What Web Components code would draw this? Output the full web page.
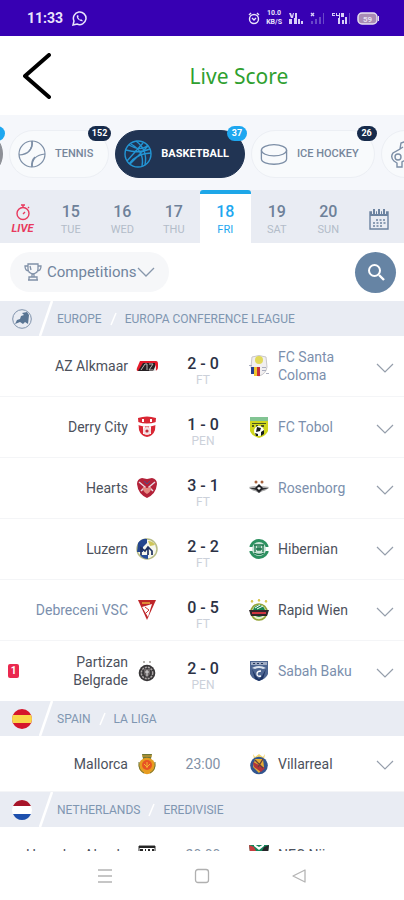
<!DOCTYPE html>
<html lang="en">
<head>
<meta charset="utf-8">
<meta name="viewport" content="width=device-width, initial-scale=1">
<title>Live Score</title>
<style>
  body {
    margin: 0;
    background: #fff;
    font-family: Roboto, "Liberation Sans", sans-serif;
    color: #3d4350;
  }
</style>
</head>
<body>
<live-score-app></live-score-app>

<script>
// small helper: every element gets an open shadow root filled from a template
function attach(el, html) {
  const template = document.createElement('template');
  template.innerHTML = html;
  el.attachShadow({mode: 'open'});
  el.shadowRoot.appendChild(template.content.cloneNode(true));
}

// club crests, all on a 22x22 grid
const crests = {
  az: `<path d="M4 6h16q2 0 2 3v3q0 4-4 4H2q-2 0-1-3z" fill="#e31b2b"/><path d="M2 16l5-8h12v8z" fill="#252023"/><path d="M5 15l4-6h2v6M13 9h4l-4 6h4" fill="none" stroke="#bdb6b6" stroke-width="1"/><path d="M20 10v6h-3z" fill="#e9e6e6"/>`,
  derry: `<path d="M2 2q9-3 18 0l-1 12q-2 6-8 7-6-1-8-7z" fill="#d92734"/><path d="M2 6q9 3 18 0v3q-9 3-18 0zM7 10h2v8H7zM13 10h2v8h-2zM6 3h2v3H6zM14 3h2v3h-2z" fill="#fff"/><circle cx="11" cy="15" r="4" fill="#f4dfe2"/><circle cx="11" cy="15" r="1.6" fill="#c32b38"/>`,
  hearts: `<path d="M11 21Q2 17 1 7q0-5 5-6l5 1 5-1q5 1 5 6-1 10-10 14z" fill="#b32239"/><path d="M3 5l6 5-4 4M19 5l-6 5 4 4" fill="none" stroke="#e3d6df" stroke-width="1.5"/><path d="M11 17q-5-3-4-7l4 1 4-1q1 4-4 7z" fill="#e58a82"/><path d="M8 4l3 3 3-3" fill="none" stroke="#4c548a"/>`,
  luzern: `<circle cx="11" cy="11" r="10" fill="#f6f7ed" stroke="#b8bc85" stroke-width="1.5"/><path d="M2 5q4-5 9-4v4L7 9v5H1z" fill="#24468e"/><path d="M12 3q5 0 7 4l-5 1z" fill="#cfc65a"/><path d="M5 17V10l4 3 3-4 4 4v4M12 9v8" fill="none" stroke="#1f3260" stroke-width="1.7"/><path d="M4 17h8v4q-5 0-8-4z" fill="#27509b"/>`,
  debrecen: `<path d="M2 1h18l-9 20z" fill="#be2529"/><path d="M6 8l10-3-4 13z" fill="#fff"/><path d="M6 3h8v2H6z" fill="#de8b38"/><path d="M9 8l4 3-3 3" stroke="#c33" fill="none"/>`,
  partizan: `<path d="M7 1h2v2H7zM13 1h2v2h-2z" fill="#b7b4b0"/><circle cx="11" cy="13" r="8.3" fill="#383638"/><circle cx="11" cy="13" r="5.7" fill="none" stroke="#aaa5a5" stroke-width="1.5" stroke-dasharray="2 1"/><path d="M8 9h6v5l-3 4-3-4z" fill="#6a6566"/><path d="M11 10v6M9 12h4" stroke="#ddd"/>`,
  mallorca: `<path d="M6 1h10l-1 5H7z" fill="#6c7739"/><path d="M6 3h10" stroke="#e2a531"/><circle cx="11" cy="13" r="8.3" fill="#e79c20"/><path d="M3 9q-1 8 5 11M19 9q1 8-5 11" fill="none" stroke="#697a40"/><circle cx="11" cy="12" r="5" fill="#e85324"/><path d="M8 11l3 3 3-3M11 9v6" fill="none" stroke="#f4b632"/>`,
  heracles: `<path d="M3 2h16v13l-8 6-8-6z" fill="#fff" stroke="#333"/><path d="M3 2h16v2H3zM4 5h3v12H4zM9 5h1v13H9zM12 5h2v14h-2zM16 5h2v11h-2z" fill="#252525"/>`,
  santa: `<path d="M4 2q7-3 14 0l1 10q-1 7-8 9-7-2-8-9z" fill="#f1eff0" stroke="#c9c7c9"/><circle cx="11" cy="5" r="4" fill="#e1d95b"/><path d="M3 12h3v7H3z" fill="#273f91"/><path d="M6 12h3v9H6z" fill="#f0c72f"/><path d="M9 12h3v9H9z" fill="#c8303c"/><path d="M14 12h4v1h-4zM14 15h4v1h-4zM1 10h3v1H1zM18 18h3v1h-3z" fill="#aaaec0"/>`,
  tobol: `<path d="M2 1h18v14q-2 5-9 7-7-2-9-7z" fill="#cfd61d"/><path d="M2 1h18v4H2z" fill="#82c493"/><path d="M4 7h14v1H4zM4 9h2v2H4zM8 9h2v2H8zM13 9h3v2h-3z" fill="#4b581e"/><circle cx="11" cy="15" r="5" fill="#fff"/><path d="M9 11l4 1-1 3-4 1zM13 16l3-2v4l-3 2zM7 17l3 1v2H8z" fill="#171e1b"/>`,
  rosenborg: `<circle cx="8" cy="5" r="1.5" fill="#a6633f"/><circle cx="14" cy="5" r="1.5" fill="#a6633f"/><path d="M1 10q6-1 10-1t10 1q-3 4-6 4l-4 2-4-2q-3 0-6-4z" fill="#a9a9a9"/><path d="M1 11h20l-7 2-3 3-3-3z" fill="#303135"/><path d="M11 7l4 4-4 4-4-4z" fill="#202125"/><path d="M9 11l2-1 2 1-2 2z" fill="#fff"/>`,
  hibs: `<circle cx="11" cy="11" r="10" fill="#2c9160"/><path d="M0 9h22v4H0z" fill="#fff"/><circle cx="11" cy="11" r="7" fill="#cce5d8"/><path d="M6 7h10M7 7v7M15 7v7M10 8v5M12 8v5M6 15q5 3 10 0M8 11h6" stroke="#187348" fill="none" stroke-width="1.3"/>`,
  rapid: `<path d="M4 1l1 2H3zM11 0l1 2h-2zM18 1l1 2h-2z" stroke="#dac64b" fill="#dac64b"/><circle cx="11" cy="13" r="8" fill="#e8efcc" stroke="#92a335" stroke-width="1.6"/><circle cx="11" cy="12" r="6" fill="#18864f"/><path d="M7 9l5-3M9 10l6-3" stroke="#fff"/><path d="M1 11h20l-2 6H3z" fill="#30262b"/><path d="M4 13h14v2H4z" fill="#cf3540"/>`,
  sabah: `<path d="M2 1h18v13q-2 5-9 7-7-2-9-7z" fill="#4c6591"/><path d="M3 2h16v3H3z" fill="#9eabc3"/><path d="M5 3h2v1H5zM9 3h2v1H9zM13 3h2v1h-2z" fill="#263759"/><path d="M4 8q7-4 14 0l-3 1q-4-2-8 0z" fill="#dce4ef"/><path d="M4 9l4 7 3 3 3-3 4-7-3 10-4 2-4-2z" fill="#1e3565"/><path d="M13 11q-4 0-4 3t4 2" fill="none" stroke="#fff" stroke-width="1.3"/>`,
  villarreal: `<path d="M5 1l2 3 4-3 4 3 2-3-1 5H6z" fill="#efd36e"/><circle cx="11" cy="12.500" r="8.800" fill="#32558f"/><path d="M7 6h8l1 8-5 6-6-6z" fill="#e7ad32"/><path d="M5 9l12 6-4 4-7-5z" fill="#b3353a"/><path d="M7 7l8 8M15 6l-5 8" stroke="#673f3c" stroke-width="1.3"/>`,
  nec: `<path d="M1 1h20l-2 15-8 5-8-5z" fill="#14855a"/><path d="M1 1l5 2 2 4-6 2z" fill="#c83c3f"/><path d="M21 1l-5 2-2 4 6 2z" fill="#27252a"/><path d="M6 2l5 4 5-4v-2l-5 3-5-3z" fill="#fff"/>`
};

class StatusBar extends HTMLElement {
  constructor() {
    super();
    attach(this, `
      <style>
        :host {
          display: flex;
          flex: none;
          align-items: center;
          box-sizing: border-box;
          height: 36px;
          padding: 0 24px 0 27px;
          gap: 9px;
          background: #3700b3;
          color: #e9e4fb;
          font-size: 14px;
          font-weight: 700;
        }
        svg { display: block; flex: none; }
        .right { display: flex; align-items: center; gap: 6px; margin-left: auto; }
        .speed { font-size: 7px; line-height: 9px; text-align: center; }
      </style>
      <span>11:33</span>
      <svg width="15" height="15" viewBox="0 0 15 15" fill="none" stroke="#e9e4fb" stroke-width="1.5"><path d="M1 14l1-4a6.300 6.300 0 1 1 3 3z"/><path d="M5 4q-1 3 2 5t4 1l-2-2-1 1-2-3 1-1z" fill="#e9e4fb" stroke="none"/></svg>
      <div class="right">
        <svg width="12" height="13" viewBox="0 0 12 13" fill="none" stroke="#e9e4fb" stroke-width="1.4"><circle cx="6" cy="7" r="4.500"/><path d="M1 3l2-2M11 3L9 1M4 6l2 2 2-2"/></svg>
        <div class="speed">10.0<br>KB/S</div>
        <svg width="16" height="13" viewBox="0 0 16 13" fill="#d9d0f7"><path d="M1 1h2l1 3 1-3h1L5 6H3zM7 1h2v5H7zM1 7h3v5H1zM6 6h3v6H6zM10 7h2v5h-2zM13 9h2v3h-2z"/></svg>
        <svg width="15" height="13" viewBox="0 0 15 13"><path d="M1 1l3 3M4 1L1 4" stroke="#d9d0f7" stroke-width="1.400"/><path d="M1 9h2v3H1zM5 7h2v5H5zM9 5h2v7H9zM13 1h1v11h-1z" fill="#6947c8"/></svg>
        <svg width="20" height="13" viewBox="0 0 20 13" fill="#d9d0f7"><path d="M1 1h3v1H2v1h2v1H1zM5 1h1v2h2V1h1v5H8V4H5zM10 1h3v4h-3zM7 6h2v6H7zM11 8h2v4h-2zM14 5h2v7h-2z"/><path d="M18 1h1v11h-1z" fill="#6947c8"/></svg>
        <svg width="23" height="13" viewBox="0 0 23 13"><rect x="1" y="1" width="19" height="11" rx="4" fill="#a98bb5" stroke="#e6dff0" stroke-width="1.500"/><path d="M21 4h1v5h-1z" fill="#e6dff0"/><text x="10.500" y="9.500" font-size="8" font-weight="700" text-anchor="middle" fill="#e6dff0">59</text></svg>
      </div>
    `);
  }
}

class PageHeader extends HTMLElement {
  constructor() {
    super();
    attach(this, `
      <style>
        :host {
          display: grid;
          flex: none;
          grid-template-columns: 74px 1fr;
          align-items: center;
          height: 79px;
        }
        button { justify-self: center; padding: 0; border: 0; background: none; }
        svg { display: block; }
        h1 {
          margin: 0;
          font: 400 21px/30px "Noto Sans", sans-serif;
          color: #2fa02f;
          text-align: center;
        }
      </style>
      <button aria-label="Back"><svg width="28" height="46" viewBox="0 0 28 46" fill="none" stroke="#000" stroke-width="4" stroke-linecap="round" stroke-linejoin="round"><path d="M26 2L2 23l24 21"/></svg></button>
      <h1><slot></slot></h1>
    `);
  }
}

class SportTab extends HTMLElement {
  constructor() {
    super();
    attach(this, `
      <style>
        :host { display: block; position: relative; flex: none; }
        button {
          display: flex;
          align-items: center;
          gap: 9px;
          height: 48px;
          padding: 0 15px 0 8px;
          border: 1px solid #eceff4;
          border-radius: 24px;
          background: #f8fafc;
          color: #76869b;
          font: 500 11px/16px Roboto, sans-serif;
          white-space: nowrap;
        }
        :host([active]) button {
          background: #213453;
          border-color: #213453;
          color: #fff;
          font-weight: 700;
        }
        :host([muted]) button { background: #8d9097; border-color: #8d9097; }
        .badge {
          position: absolute;
          top: -4px;
          right: -2px;
          min-width: 12px;
          padding: 0 4px;
          border-radius: 8px;
          background: #172b4b;
          color: #fff;
          font-size: 9px;
          line-height: 15px;
          font-weight: 700;
          text-align: center;
        }
        .badge:empty { display: none; }
        :host([blue]) .badge { display: block; min-height: 15px; background: #1ea7f0; }
      </style>
      <button><slot name="icon"></slot><slot></slot></button>
      <span class="badge"></span>
    `);
  }
  connectedCallback() {
    this.shadowRoot.querySelector('.badge').textContent = this.getAttribute('count') || '';
  }
}

class SportTabs extends HTMLElement {
  constructor() {
    super();
    attach(this, `
      <style>
        :host {
          display: flex;
          flex: none;
          box-sizing: border-box;
          gap: 6px;
          padding: 15px 0 12px;
          overflow: hidden;
          background: #f5f7fb;
        }
        svg { display: block; flex: none; }
      </style>
      <sport-tab blue muted><svg slot="icon" width="28" height="28" viewBox="0 0 28 28" fill="none" stroke="#fff"><circle cx="14" cy="14" r="13"/></svg></sport-tab>
      <sport-tab count="152">
        <svg slot="icon" width="28" height="28" viewBox="0 0 28 28" fill="none" stroke="#7c8ea6" stroke-width="1.200"><circle cx="14" cy="14" r="13"/><path d="M11 1q3 8-1 11-3 3-9 2M15 1q3 9-2 13-5 4-11 3" stroke="none"/><path d="M14 1q1 13-13 14M14 27q0-12 13-13"/><path d="M14 1q1 6-3 10M14 27q-1-6 3-10" stroke-width="1.600"/></svg>
        TENNIS
      </sport-tab>
      <sport-tab active blue count="37">
        <svg slot="icon" width="28" height="28" viewBox="0 0 28 28" fill="none" stroke="#2395d4" stroke-width="1.400"><circle cx="14" cy="14" r="13"/><path d="M5 5q12 7 19 0M2 10q13 4 24-1M12 1q12 9 9 24M7 4q14 8 11 22M19 3L3 21M24 6L6 24M5 24q8-11 22-11"/></svg>
        BASKETBALL
      </sport-tab>
      <sport-tab count="26">
        <svg slot="icon" width="28" height="28" viewBox="0 0 30 28" fill="none" stroke="#7c8ea6" stroke-width="1.400"><ellipse cx="15" cy="10" rx="13.500" ry="6"/><path d="M1.500 10v9c0 8 27 8 27 0v-9"/></svg>
        ICE HOCKEY
      </sport-tab>
      <sport-tab>
        <svg slot="icon" width="28" height="28" viewBox="0 0 28 28" fill="none" stroke="#7c8ea6" stroke-width="1.400"><path d="M14 2l-3 1-1 6-7 4q-3 4 1 8l3 2v4h5v-5l5-3V4zM10 9l3-2"/><circle cx="8" cy="17" r="3"/></svg>
      </sport-tab>
    `);
  }
  connectedCallback() {
    // the strip opens scrolled just past the first sport
    const first = this.shadowRoot.querySelector('sport-tab');
    this.scrollLeft = first.offsetWidth - 3;
  }
}

class DayTab extends HTMLElement {
  constructor() {
    super();
    attach(this, `
      <style>
        :host { display: block; }
        button {
          display: flex;
          flex-direction: column;
          align-items: center;
          box-sizing: border-box;
          width: 100%;
          height: 53px;
          padding: 8px 0 0;
          border: 0;
          border-top: 4px solid transparent;
          border-radius: 3px 3px 0 0;
          background: none;
          color: #b3bcc9;
          font: 400 11px/16px Roboto, sans-serif;
        }
        b { font-size: 16px; line-height: 20px; font-weight: 500; color: #6e8199; }
        :host([active]) button { background: #fff; border-top-color: #1ea7e8; color: #1ea7f0; }
        :host([active]) b { color: #1ea7f0; }
      </style>
      <button><b></b><slot></slot></button>
    `);
  }
  connectedCallback() {
    this.shadowRoot.querySelector('b').textContent = this.getAttribute('date');
  }
}

class DayStrip extends HTMLElement {
  constructor() {
    super();
    attach(this, `
      <style>
        :host {
          display: grid;
          flex: none;
          grid-template-columns: 45px repeat(6, 1fr) 50px;
          background: #e9ecf3;
        }
        button {
          display: flex;
          flex-direction: column;
          align-items: center;
          justify-content: center;
          padding: 4px 0 0;
          border: 0;
          background: none;
        }
        .live {
          gap: 1px;
          padding-top: 6px;
          color: #e8395d;
          font: italic 700 11px/14px Roboto, sans-serif;
        }
      </style>
      <button class="live">
        <svg width="16" height="17" viewBox="0 0 16 17" fill="none" stroke="#e8395d" stroke-width="1.400"><circle cx="8" cy="9.500" r="6"/><path d="M6 1h4M8 1v2M8 10l2-2M13 3l1 1"/></svg>
        LIVE
      </button>
      <day-tab date="15">TUE</day-tab>
      <day-tab date="16">WED</day-tab>
      <day-tab date="17">THU</day-tab>
      <day-tab date="18" active>FRI</day-tab>
      <day-tab date="19">SAT</day-tab>
      <day-tab date="20">SUN</day-tab>
      <button aria-label="Calendar"><svg width="22" height="24" viewBox="0 0 22 24" fill="none" stroke="#6c83a0" stroke-width="1.400"><path d="M2 5h18v17H2z"/><path d="M2 7h18" stroke-width="4"/><path d="M6 2v5M11 2v5M16 2v5" stroke="#e9ecf3" stroke-width="4"/><path d="M6 2v5M11 2v5M16 2v5" stroke-width="2"/><path d="M8 13h10M5 16h13M5 19h10" stroke-width="1.600" stroke-dasharray="2 1.500"/></svg></button>
    `);
  }
}

class FilterBar extends HTMLElement {
  constructor() {
    super();
    attach(this, `
      <style>
        :host {
          display: flex;
          flex: none;
          align-items: center;
          justify-content: space-between;
          height: 58px;
          padding: 0 8px 0 10px;
        }
        button { display: flex; align-items: center; border: 0; padding: 0; }
        .competitions {
          height: 40px;
          padding: 0 14px;
          border-radius: 20px;
          background: #f6f7f9;
          color: #71859e;
          font: 400 15px/20px Roboto, sans-serif;
        }
        .competitions svg:first-child { margin-right: 5px; }
        .search {
          justify-content: center;
          width: 41px;
          height: 41px;
          border-radius: 50%;
          background: #6684a4;
        }
      </style>
      <button class="competitions">
        <svg width="18" height="18" viewBox="0 0 18 18" fill="none" stroke="#8091a8" stroke-width="1.300"><path d="M4 1h10v5q0 4-5 5-5-1-5-5zM4 3H1q0 5 4 5M14 3h3q0 5-4 5M8 11v3M10 11v3M5 14h8v3H5zM6 3l1 4M4 17h10"/></svg>
        Competitions
        <svg width="18" height="11" viewBox="0 0 18 11" fill="none" stroke="#8797ab" stroke-width="1.300"><path d="M1 1l8 8 8-8"/></svg>
      </button>
      <button class="search" aria-label="Search"><svg width="18" height="18" viewBox="0 0 18 18" fill="none" stroke="#fff" stroke-width="2"><circle cx="7.500" cy="7.500" r="5.500"/><path d="M12 12l5 5" stroke-width="2.400"/></svg></button>
    `);
  }
}

class LeagueHeader extends HTMLElement {
  constructor() {
    super();
    attach(this, `
      <style>
        :host {
          display: flex;
          align-items: center;
          height: 35px;
          padding-left: 12px;
          background: #e9ecf3;
          color: #7f96b1;
          font-size: 12px;
          line-height: 16px;
        }
        svg { display: block; }
        .cut { margin: 0 4px 0 7px; }
        .bar { margin: 0 8px; }
        a { color: inherit; text-decoration: none; }
      </style>
      <slot name="flag"></slot>
      <svg class="cut" width="14" height="35" viewBox="0 0 14 35"><path d="M13 0L1 35" stroke="#fff" stroke-width="2.500"/></svg>
      <a href="#country"><slot></slot></a>
      <svg class="bar" width="7" height="14" viewBox="0 0 7 14"><path d="M6 1L1 13" stroke="#fff" stroke-width="1.500"/></svg>
      <a href="#league"><slot name="league"></slot></a>
    `);
  }
}

class MatchRow extends HTMLElement {
  constructor() {
    super();
    attach(this, `
      <style>
        :host {
          display: grid;
          grid-template-columns: 158fr 90px 156fr;
          align-items: center;
          min-height: 60px;
          border-bottom: 1px solid #f4f5f7;
          font-size: 14px;
          line-height: 18px;
          color: #4c515c;
        }
        :host([last]) { border-bottom: 0; }
        :host([upcoming]) { min-height: 55px; }
        .home, .away { display: flex; align-items: center; gap: 8px; }
        .home { padding-left: 8px; text-align: right; }
        .home .name { margin-left: auto; }
        .away { padding-right: 10px; }
        .away button { margin-left: auto; }
        .lost { color: #7b8fad; }
        .crest { display: block; flex: none; }
        .card {
          flex: none;
          width: 11px;
          border-radius: 2px;
          background: #ea294f;
          color: #fff;
          font-size: 10px;
          line-height: 14px;
          font-weight: 700;
          text-align: center;
        }
        .middle { text-align: center; }
        .score { color: #2c3245; font-size: 16px; font-weight: 500; }
        .state { color: #ccd1da; font-size: 12px; line-height: 14px; }
        .played { padding-top: 10px; }
        .time { color: #8291a5; }
        button { flex: none; padding: 4px 0 0; border: 0; background: none; }
        button svg { display: block; }
      </style>
      <div class="home"></div>
      <div class="middle"></div>
      <div class="away"></div>
    `);
  }
  connectedCallback() {
    const get = name => this.getAttribute(name) || '';
    const find = selector => this.shadowRoot.querySelector(selector);
    const crest = id => `<svg class="crest" width="22" height="22" viewBox="0 0 22 22">${crests[id]}</svg>`;
    const lost = side => get('lost') === side ? ' lost' : '';

    find('.home').innerHTML =
      (get('card') ? `<span class="card">${get('card')}</span>` : '') +
      `<span class="name${lost('home')}">${get('home')}</span>${crest(get('home-crest'))}`;

    find('.middle').innerHTML = this.hasAttribute('upcoming')
      ? `<div class="time">${get('score')}</div>`
      : `<div class="played"><div class="score">${get('score')}</div><div class="state">${get('state')}</div></div>`;

    find('.away').innerHTML =
      `${crest(get('away-crest'))}<span class="name${lost('away')}">${get('away')}</span>
      <button aria-label="Details"><svg width="18" height="11" viewBox="0 0 18 11" fill="none" stroke="#959eab" stroke-width="1.200"><path d="M1 1l8 8 8-8"/></svg></button>`;
  }
}

class SystemNav extends HTMLElement {
  constructor() {
    super();
    attach(this, `
      <style>
        :host {
          display: flex;
          flex: none;
          align-items: center;
          justify-content: center;
          gap: 81px;
          height: 49px;
          background: #fff;
        }
        button { padding: 0; border: 0; background: none; }
        svg { display: block; }
      </style>
      <button aria-label="Menu"><svg width="16" height="16" viewBox="0 0 16 16" fill="none" stroke="#b4b4b4" stroke-width="1.500"><path d="M1 2h14M1 8h14M1 14h14"/></svg></button>
      <button aria-label="Home"><svg width="16" height="16" viewBox="0 0 16 16" fill="none" stroke="#b0b0b0" stroke-width="1.300"><rect x="1.500" y="1.500" width="13" height="13" rx="2.500"/></svg></button>
      <button aria-label="Back"><svg width="16" height="16" viewBox="0 0 16 16" fill="none" stroke="#b4b4b4" stroke-width="1.300" stroke-linejoin="round"><path d="M14 2v12L2 8z"/></svg></button>
    `);
  }
}

class LiveScoreApp extends HTMLElement {
  constructor() {
    super();
    attach(this, `
      <style>
        :host { display: flex; flex-direction: column; height: 100vh; }
        main { flex: 1; min-height: 0; overflow: hidden; }
        svg { display: block; }
      </style>
      <status-bar></status-bar>
      <page-header>Live Score</page-header>
      <sport-tabs></sport-tabs>
      <day-strip></day-strip>
      <filter-bar></filter-bar>
      <main>
        <league-header>
          <svg slot="flag" width="20" height="20" viewBox="0 0 20 20"><circle cx="10" cy="10" r="9.300" fill="#e9ecf3" stroke="#7f92ab"/><path d="M10 4l5-1 2 3-1 9-3-2-2 2-3-2-5 2 2-4 3-1 1-3 3-1z" fill="#587493"/></svg>
          EUROPE<span slot="league">EUROPA CONFERENCE LEAGUE</span>
        </league-header>
        <match-row home="AZ Alkmaar" home-crest="az" score="2 - 0" state="FT" away="FC Santa Coloma" away-crest="santa" lost="away"></match-row>
        <match-row home="Derry City" home-crest="derry" score="1 - 0" state="PEN" away="FC Tobol" away-crest="tobol" lost="away"></match-row>
        <match-row home="Hearts" home-crest="hearts" score="3 - 1" state="FT" away="Rosenborg" away-crest="rosenborg" lost="away"></match-row>
        <match-row home="Luzern" home-crest="luzern" score="2 - 2" state="FT" away="Hibernian" away-crest="hibs"></match-row>
        <match-row home="Debreceni VSC" home-crest="debrecen" score="0 - 5" state="FT" away="Rapid Wien" away-crest="rapid" lost="home"></match-row>
        <match-row last card="1" home="Partizan Belgrade" home-crest="partizan" score="2 - 0" state="PEN" away="Sabah Baku" away-crest="sabah" lost="away"></match-row>
        <league-header>
          <svg slot="flag" width="20" height="20" viewBox="0 0 20 20"><circle cx="10" cy="10" r="10" fill="#d5152b"/><path d="M1 6h18q2 4 0 8H1q-2-4 0-8z" fill="#f9d548"/></svg>
          SPAIN<span slot="league">LA LIGA</span>
        </league-header>
        <match-row upcoming home="Mallorca" home-crest="mallorca" score="23:00" away="Villarreal" away-crest="villarreal"></match-row>
        <league-header>
          <svg slot="flag" width="20" height="20" viewBox="0 0 20 20"><circle cx="10" cy="10" r="10" fill="#fff"/><path d="M1 6q3-6 9-6t9 6z" fill="#a71429"/><path d="M1 14q3 6 9 6t9-6z" fill="#1e50ad"/></svg>
          NETHERLANDS<span slot="league">EREDIVISIE</span>
        </league-header>
        <match-row upcoming home="Heracles Almelo" home-crest="heracles" score="20:00" away="NEC Nijmegen" away-crest="nec"></match-row>
      </main>
      <system-nav></system-nav>
    `);
  }
}

customElements.define('status-bar', StatusBar);
customElements.define('page-header', PageHeader);
customElements.define('sport-tab', SportTab);
customElements.define('sport-tabs', SportTabs);
customElements.define('day-tab', DayTab);
customElements.define('day-strip', DayStrip);
customElements.define('filter-bar', FilterBar);
customElements.define('league-header', LeagueHeader);
customElements.define('match-row', MatchRow);
customElements.define('system-nav', SystemNav);
customElements.define('live-score-app', LiveScoreApp);
</script>
</body>
</html>
